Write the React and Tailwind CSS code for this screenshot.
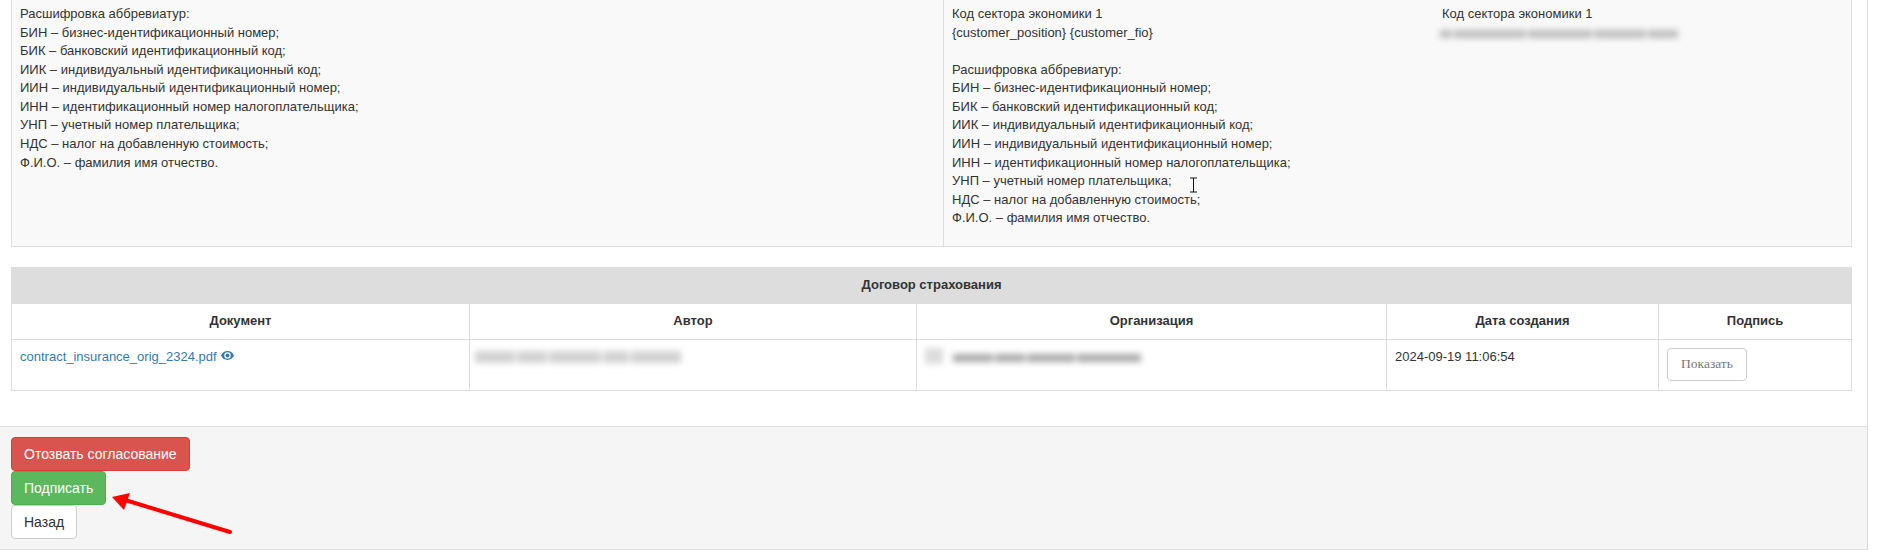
import * as React from 'react';

const abbreviations = [
  'БИН – бизнес-идентификационный номер;',
  'БИК – банковский идентификационный код;',
  'ИИК – индивидуальный идентификационный код;',
  'ИИН – индивидуальный идентификационный номер;',
  'ИНН – идентификационный номер налогоплательщика;',
  'УНП – учетный номер плательщика;',
  'НДС – налог на добавленную стоимость;',
  'Ф.И.О. – фамилия имя отчество.',
];

function Abbreviations() {
  return (
    <div>
      <p>Расшифровка аббревиатур:</p>
      {abbreviations.map((line) => (
        <p key={line}>{line}</p>
      ))}
    </div>
  );
}

// redacted text in the screenshot: a row of smudged word blocks
function Blurred({ words, className, wordClass }) {
  return (
    <div className={`flex items-end gap-[2px] blur-[3px] ${className}`}>
      {words.map((w, i) => (
        <div key={i} className={wordClass} style={{ width: w }} />
      ))}
    </div>
  );
}

function EyeIcon() {
  return (
    <svg viewBox="0 0 16 16" className="inline-block w-[13px] h-[13px] ml-[4px] align-[-1px]" fill="#337ab7">
      <path d="M8 2.5C4.2 2.5 1.3 5 0 8c1.3 3 4.2 5.5 8 5.5s6.700-2.500 8-5.500c-1.300-3-4.200-5.500-8-5.500zm0 9.500a4 4 0 1 1 0-8 4 4 0 0 1 0 8z" />
      <circle cx="8" cy="8" r="2.400" />
    </svg>
  );
}

export default function App() {
  return (
    <div className="h-[557px] overflow-hidden bg-white text-[13px] leading-[18.57px] text-[#333] font-['Liberation_Sans',Arial,sans-serif]">
      <div className="h-[550px] mr-[15px] border-r border-b border-[#ddd] flex flex-col">
        <div className="pl-[11px] pr-[15px] flex-1 flex flex-col">
          <div className="h-[247px] flex bg-[#f9f9f9] border border-t-0 border-[#ddd]">
            <div className="w-[932px] pl-[8px] pt-[5px] border-r border-[#ddd]">
              <Abbreviations />
            </div>
            <div className="flex-1 pl-[8px] flex relative">
              <div className="w-[490px] pt-[5px]">
                <p>Код сектора экономики 1</p>
                <p>{'{customer_position} {customer_fio}'}</p>
                <p className="h-[18.57px]" />
                <Abbreviations />
              </div>
              <div className="pt-[5px]">
                <p>Код сектора экономики 1</p>
                <Blurred
                  words={[12, 72, 64, 52, 30]}
                  className="w-[240px] h-[8px] mt-[6px] -ml-[2px]"
                  wordClass="h-full bg-[#bdbdbd]"
                />
              </div>
              {/* text cursor */}
              <svg className="absolute left-[245px] top-[177px] w-[9px] h-[16px]" viewBox="0 0 9 16">
                <path d="M1 1 H8 M4.500 1 V15 M1 15 H8" stroke="#111" strokeWidth="1" fill="none" />
              </svg>
            </div>
          </div>

          <table className="mt-[20px] w-full table-fixed border-collapse border border-[#ddd]">
            <colgroup>
              <col className="w-[458px]" />
              <col className="w-[447px]" />
              <col className="w-[470px]" />
              <col className="w-[272px]" />
              <col />
            </colgroup>
            <thead>
              <tr>
                <th colSpan={5} className="h-[36px] bg-[#ddd] font-bold text-center">Договор страхования</th>
              </tr>
              <tr className="h-[36px]">
                <th className="border border-[#ddd] font-bold text-center">Документ</th>
                <th className="border border-[#ddd] font-bold text-center">Автор</th>
                <th className="border border-[#ddd] font-bold text-center">Организация</th>
                <th className="border border-[#ddd] font-bold text-center">Дата создания</th>
                <th className="border border-[#ddd] font-bold text-center">Подпись</th>
              </tr>
            </thead>
            <tbody>
              <tr className="h-[51px] align-top">
                <td className="border border-[#ddd] p-[8px]">
                  <a className="text-[#337ab7]">
                    contract_insurance_orig_2324.pdf
                    <EyeIcon />
                  </a>
                </td>
                <td className="border border-[#ddd] p-[8px]">
                  <Blurred
                    words={[40, 30, 52, 26, 50]}
                    className="w-[214px] h-[12px] mt-[3px] -ml-[3px]"
                    wordClass="h-full bg-[#d2d2d2]"
                  />
                </td>
                <td className="border border-[#ddd] p-[8px]">
                  <Blurred
                    words={[18]}
                    className="w-[20px] h-[16px] float-left"
                    wordClass="h-full bg-[#dcdcdc]"
                  />
                  <Blurred
                    words={[40, 30, 48, 64]}
                    className="ml-[28px] w-[190px] h-[8px] mt-[6px]"
                    wordClass="h-full bg-[#a8a8a8]"
                  />
                </td>
                <td className="border border-[#ddd] p-[8px]">2024-09-19 11:06:54</td>
                <td className="border border-[#ddd] p-[8px]">
                  <button className="h-[33px] w-[80px] border border-[#ccc] rounded-[4px] text-[#777] text-[13.5px] font-['Liberation_Serif',serif]">
                    Показать
                  </button>
                </td>
              </tr>
            </tbody>
          </table>
        </div>

        <div className="h-[123px] bg-[#f5f5f5] border-t border-[#ddd] pt-[10px] pl-[11px] flex flex-col items-start relative">
          <button className="h-[34px] px-[12px] text-[14px] text-white bg-[#d9534f] border border-[#d43f3a] rounded-[4px]">Отозвать согласование</button>
          <button className="h-[34px] px-[12px] text-[14px] text-white bg-[#5cb85c] border border-[#4cae4c] rounded-[4px]">Подписать</button>
          <button className="h-[34px] px-[12px] text-[14px] text-[#333] bg-white border border-[#ccc] rounded-[4px]">Назад</button>
          <svg className="absolute left-[110px] top-[63px] w-[125px] h-[50px]" viewBox="0 0 125 50">
            <path d="M120 42 L15 10" stroke="#f00" strokeWidth="4" strokeLinecap="round" fill="none" />
            <path d="M2 7 L20 3 L14 20 Z" fill="#f00" />
          </svg>
        </div>
      </div>
    </div>
  );
}
